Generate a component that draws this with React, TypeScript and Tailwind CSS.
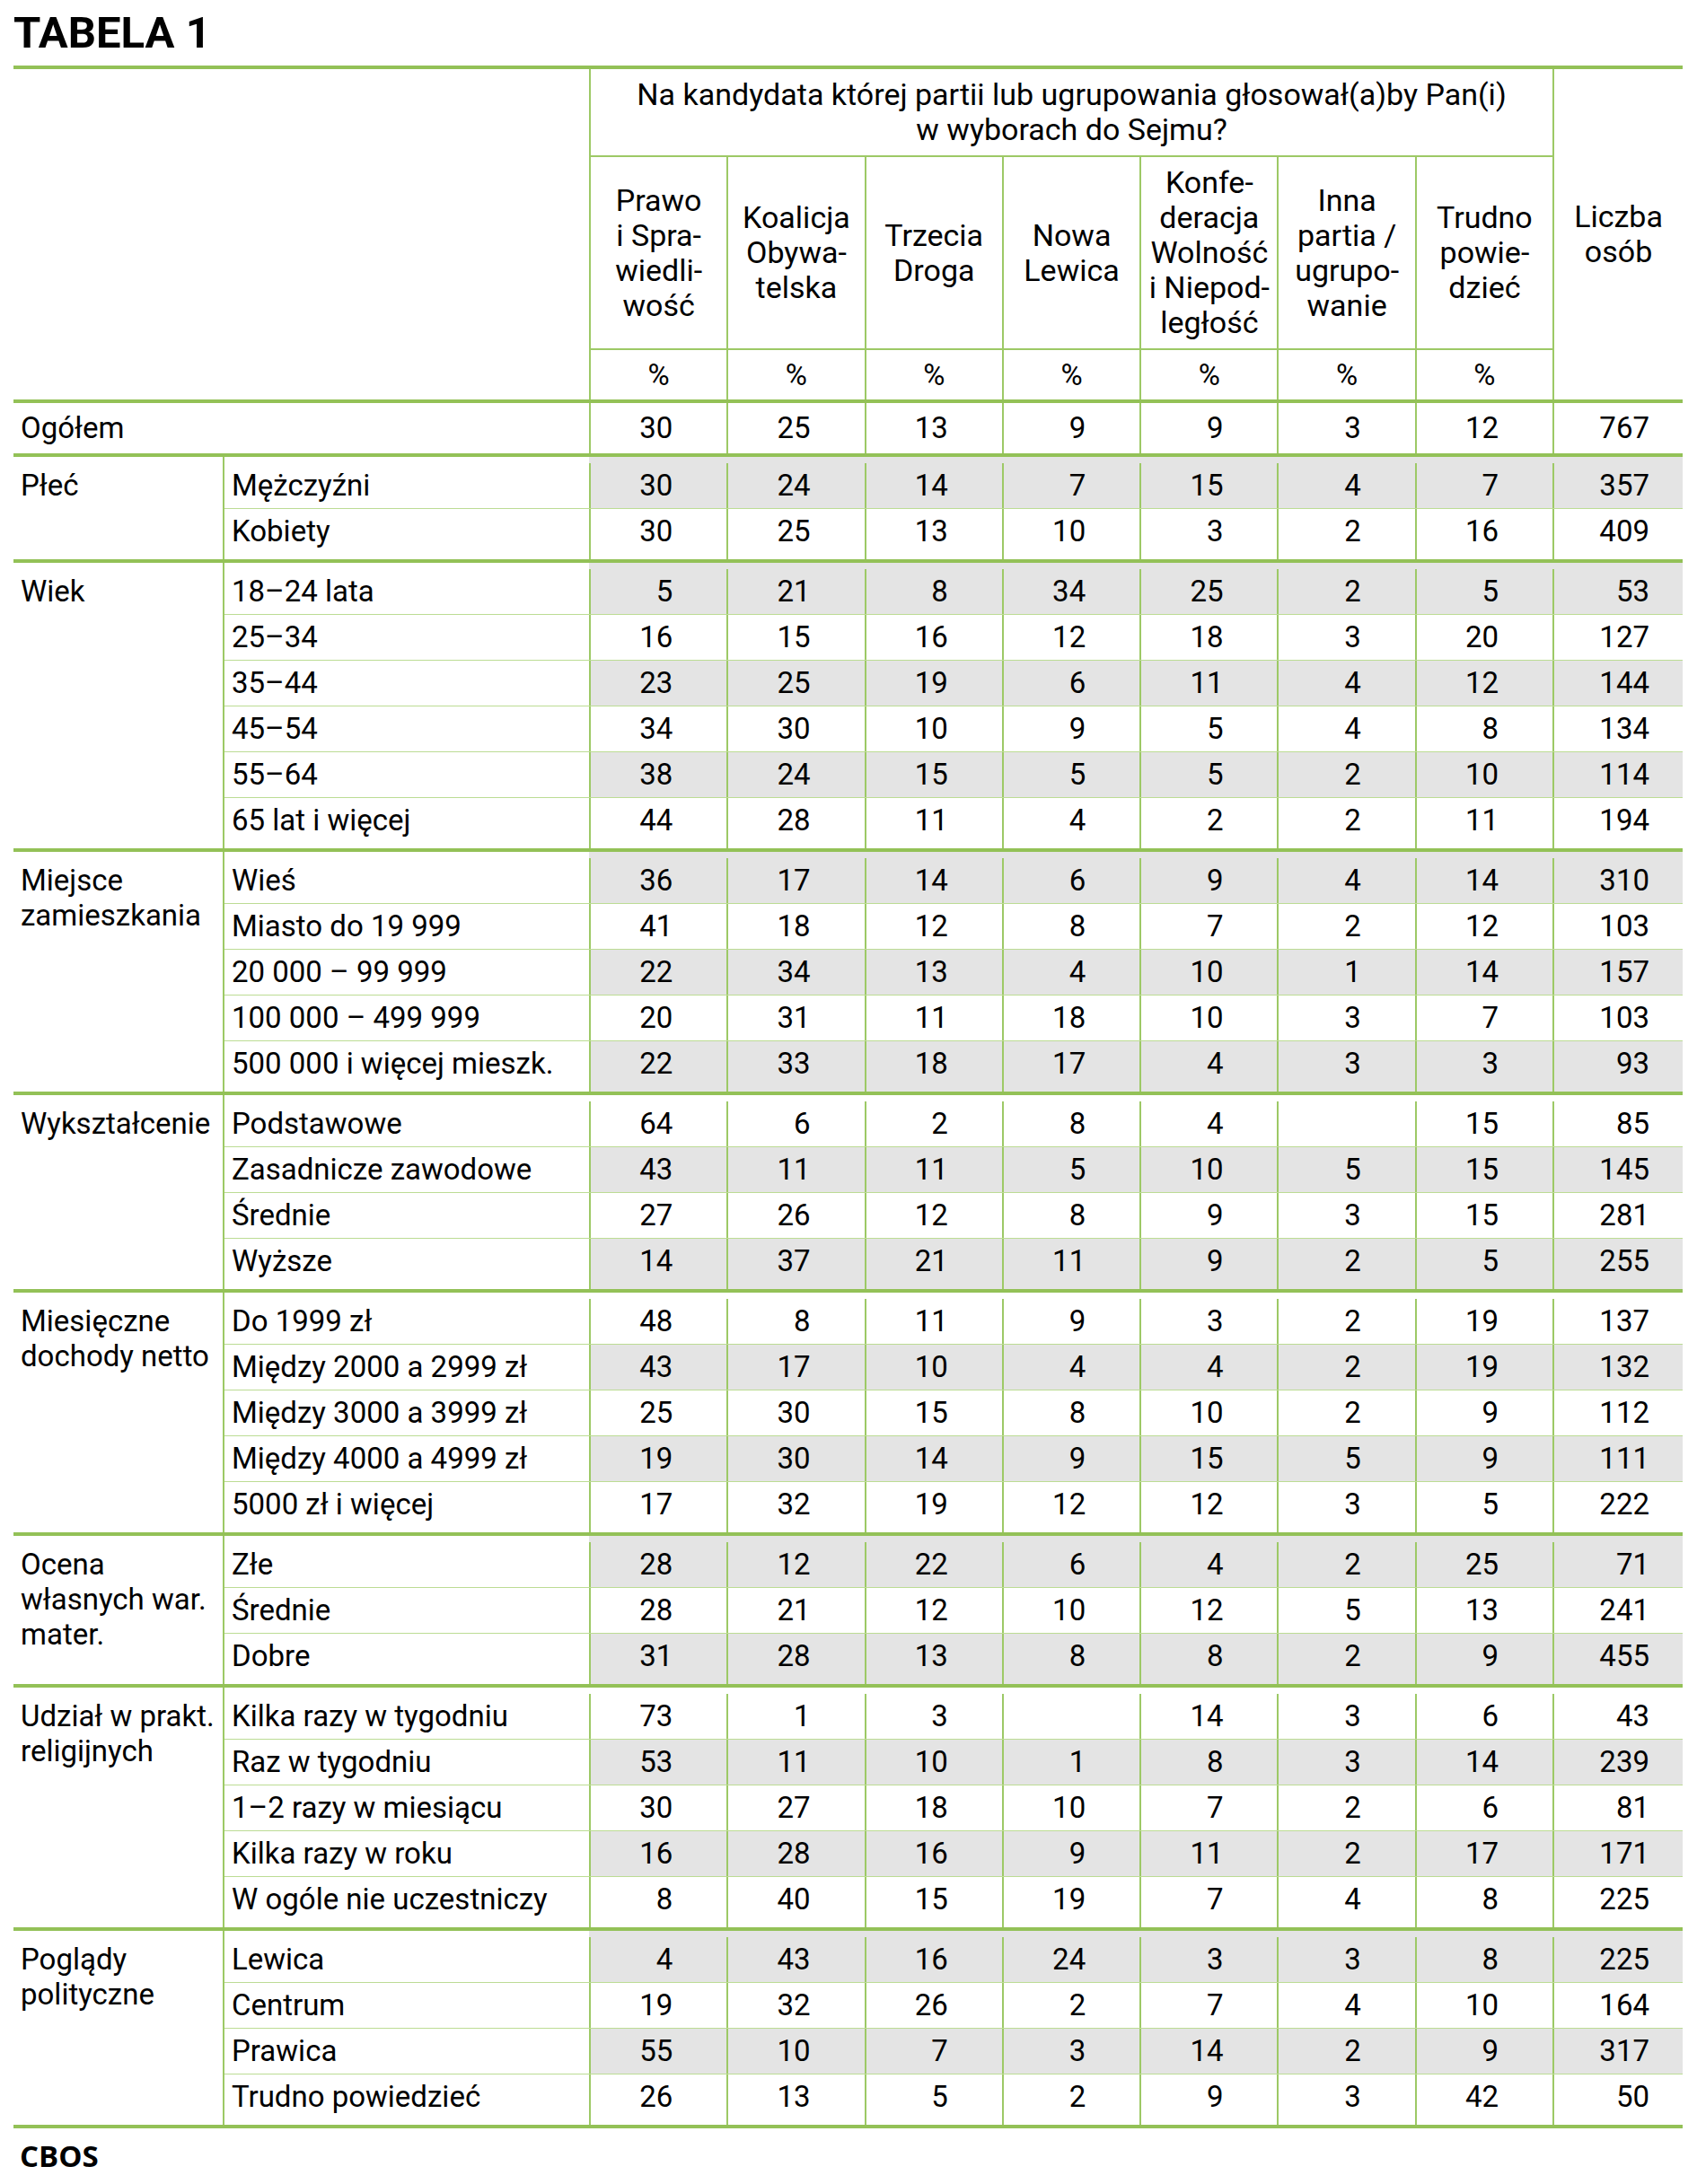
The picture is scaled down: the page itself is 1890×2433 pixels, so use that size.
type Row = { label: string; values: (number | null)[]; n: number };
type Group = { label: string; rows: Row[] };

const parties = [
  ["Prawo", "i Spra-", "wiedli-", "wość"],
  ["Koalicja", "Obywa-", "telska"],
  ["Trzecia", "Droga"],
  ["Nowa", "Lewica"],
  ["Konfe-", "deracja", "Wolność", "i Niepod-", "ległość"],
  ["Inna", "partia /", "ugrupo-", "wanie"],
  ["Trudno", "powie-", "dzieć"],
];

const r = (label: string, values: (number | null)[], n: number): Row => ({ label, values, n });

const groups: Group[] = [
  {
    label: "Płeć",
    rows: [r("Mężczyźni", [30, 24, 14, 7, 15, 4, 7], 357), r("Kobiety", [30, 25, 13, 10, 3, 2, 16], 409)],
  },
  {
    label: "Wiek",
    rows: [
      r("18–24 lata", [5, 21, 8, 34, 25, 2, 5], 53),
      r("25–34", [16, 15, 16, 12, 18, 3, 20], 127),
      r("35–44", [23, 25, 19, 6, 11, 4, 12], 144),
      r("45–54", [34, 30, 10, 9, 5, 4, 8], 134),
      r("55–64", [38, 24, 15, 5, 5, 2, 10], 114),
      r("65 lat i więcej", [44, 28, 11, 4, 2, 2, 11], 194),
    ],
  },
  {
    label: "Miejsce zamieszkania",
    rows: [
      r("Wieś", [36, 17, 14, 6, 9, 4, 14], 310),
      r("Miasto do 19 999", [41, 18, 12, 8, 7, 2, 12], 103),
      r("20 000 – 99 999", [22, 34, 13, 4, 10, 1, 14], 157),
      r("100 000 – 499 999", [20, 31, 11, 18, 10, 3, 7], 103),
      r("500 000 i więcej mieszk.", [22, 33, 18, 17, 4, 3, 3], 93),
    ],
  },
  {
    label: "Wykształcenie",
    rows: [
      r("Podstawowe", [64, 6, 2, 8, 4, null, 15], 85),
      r("Zasadnicze zawodowe", [43, 11, 11, 5, 10, 5, 15], 145),
      r("Średnie", [27, 26, 12, 8, 9, 3, 15], 281),
      r("Wyższe", [14, 37, 21, 11, 9, 2, 5], 255),
    ],
  },
  {
    label: "Miesięczne dochody netto",
    rows: [
      r("Do 1999 zł", [48, 8, 11, 9, 3, 2, 19], 137),
      r("Między 2000 a 2999 zł", [43, 17, 10, 4, 4, 2, 19], 132),
      r("Między 3000 a 3999 zł", [25, 30, 15, 8, 10, 2, 9], 112),
      r("Między 4000 a 4999 zł", [19, 30, 14, 9, 15, 5, 9], 111),
      r("5000 zł i więcej", [17, 32, 19, 12, 12, 3, 5], 222),
    ],
  },
  {
    label: "Ocena własnych war. mater.",
    rows: [
      r("Złe", [28, 12, 22, 6, 4, 2, 25], 71),
      r("Średnie", [28, 21, 12, 10, 12, 5, 13], 241),
      r("Dobre", [31, 28, 13, 8, 8, 2, 9], 455),
    ],
  },
  {
    label: "Udział w prakt. religijnych",
    rows: [
      r("Kilka razy w tygodniu", [73, 1, 3, null, 14, 3, 6], 43),
      r("Raz w tygodniu", [53, 11, 10, 1, 8, 3, 14], 239),
      r("1–2 razy w miesiącu", [30, 27, 18, 10, 7, 2, 6], 81),
      r("Kilka razy w roku", [16, 28, 16, 9, 11, 2, 17], 171),
      r("W ogóle nie uczestniczy", [8, 40, 15, 19, 7, 4, 8], 225),
    ],
  },
  {
    label: "Poglądy polityczne",
    rows: [
      r("Lewica", [4, 43, 16, 24, 3, 3, 8], 225),
      r("Centrum", [19, 32, 26, 2, 7, 4, 10], 164),
      r("Prawica", [55, 10, 7, 3, 14, 2, 9], 317),
      r("Trudno powiedzieć", [26, 13, 5, 2, 9, 3, 42], 50),
    ],
  },
];

function DataCells({ values, n, gray }: { values: (number | null)[]; n: number; gray: boolean }) {
  const bg = gray ? "bg-[#e4e4e4]" : "bg-white";
  return (
    <>
      {values.map((v, i) => (
        <div key={i} className={`w-[153.3px] shrink-0 border-l-2 border-[#9dc966] pr-[60px] text-right ${bg}`}>
          {v ?? ""}
        </div>
      ))}
      <div className={`flex-1 border-l-2 border-[#9dc966] pr-[37px] text-right ${bg}`}>{n}</div>
    </>
  );
}

export default function App() {
  let stripe = 0;
  return (
    <div className="w-[1890px] bg-white pt-[12px] pb-[14px] font-[Roboto,sans-serif] text-[33px] text-black">
      <h1 className="ml-[15px] text-[49px] leading-[49px] font-bold">TABELA 1</h1>

      <div className="ml-[15px] mt-[12px] w-[1859px]">
        {/* header */}
        <div className="flex border-y-4 border-[#93c157] text-[34px] leading-[39px]">
          <div className="w-[641px] shrink-0" />
          <div className="flex w-[1073.1px] shrink-0 flex-col">
            <div className="flex h-[96px] items-center justify-center border-l-2 border-[#9dc966] text-center">
              Na kandydata której partii lub ugrupowania głosował(a)by Pan(i)
              <br />w wyborach do Sejmu?
            </div>
            <div className="flex border-y-2 border-[#9dc966]">
              {parties.map((p, i) => (
                <div
                  key={i}
                  className="flex h-[213px] w-[153.3px] shrink-0 flex-col items-center justify-center border-l-2 border-[#9dc966] text-center"
                >
                  {p.map((line) => (
                    <span key={line}>{line}</span>
                  ))}
                </div>
              ))}
            </div>
            <div className="flex text-[33px]">
              {parties.map((_, i) => (
                <div
                  key={i}
                  className="flex h-[55px] w-[153.3px] shrink-0 items-center justify-center border-l-2 border-[#9dc966]"
                >
                  %
                </div>
              ))}
            </div>
          </div>
          <div className="flex flex-1 flex-col items-center justify-center border-l-2 border-[#9dc966] text-center">
            <span>Liczba</span>
            <span>osób</span>
          </div>
        </div>

        {/* Ogółem */}
        <div className="flex h-[56px] items-stretch leading-[56px]">
          <div className="w-[641px] shrink-0 pl-[8px]">Ogółem</div>
          <DataCells values={[30, 25, 13, 9, 9, 3, 12]} n={767} gray={false} />
        </div>

        {groups.map((g) => (
          <div key={g.label} className="flex border-t-4 border-[#93c157]">
            <div className="w-[233px] shrink-0 pl-[8px] pt-[12px] leading-[39px]">{g.label}</div>
            <div className="flex flex-1 flex-col border-l-2 border-[#9dc966]">
              {g.rows.map((row, i) => {
                stripe += 1;
                const gray = stripe % 2 === 1;
                const first = i === 0;
                const last = i === g.rows.length - 1;
                const h = first && last ? "h-[63px]" : first ? "h-[58px]" : last ? "h-[56px]" : "h-[51px]";
                const pad = first ? "pt-[7px]" : "";
                return (
                  <div
                    key={row.label}
                    className={`flex ${h} leading-[50px] ${last ? "" : "border-b border-[#bcdc94]"}`}
                  >
                    <div className={`w-[406px] shrink-0 pl-[8px] ${pad}`}>{row.label}</div>
                    <div className={`flex flex-1 ${pad} ${gray ? "bg-[#e4e4e4]" : ""}`}>
                      <DataCells values={row.values} n={row.n} gray={gray} />
                    </div>
                  </div>
                );
              })}
            </div>
          </div>
        ))}
        <div className="h-[4px] bg-[#93c157]" />
      </div>

      <div className="ml-[22px] mt-[16px] font-['Open_Sans',sans-serif] text-[33px] leading-[30px] font-bold">CBOS</div>
    </div>
  );
}
